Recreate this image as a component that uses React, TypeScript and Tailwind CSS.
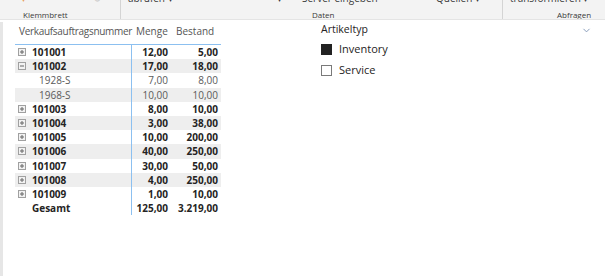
import { ChevronDown } from "lucide-react";

type Row = {
  id: string;
  menge: string;
  bestand: string;
  level: 0 | 1;
  expanded?: boolean;
};

const rows: Row[] = [
  { id: "101001", menge: "12,00", bestand: "5,00", level: 0 },
  { id: "101002", menge: "17,00", bestand: "18,00", level: 0, expanded: true },
  { id: "1928-S", menge: "7,00", bestand: "8,00", level: 1 },
  { id: "1968-S", menge: "10,00", bestand: "10,00", level: 1 },
  { id: "101003", menge: "8,00", bestand: "10,00", level: 0 },
  { id: "101004", menge: "3,00", bestand: "38,00", level: 0 },
  { id: "101005", menge: "10,00", bestand: "200,00", level: 0 },
  { id: "101006", menge: "40,00", bestand: "250,00", level: 0 },
  { id: "101007", menge: "30,00", bestand: "50,00", level: 0 },
  { id: "101008", menge: "4,00", bestand: "250,00", level: 0 },
  { id: "101009", menge: "1,00", bestand: "10,00", level: 0 },
];

function ExpandBox({ open }: { open?: boolean }) {
  return (
    <span className="w-[8px] h-[8px] border border-[#a0a0a0] bg-[#f2f2f2] flex items-center justify-center mr-[6px] shrink-0">
      <svg width="6" height="6" viewBox="0 0 6 6">
        <path d="M1 3h4" stroke="#666" strokeWidth="1" />
        {!open && <path d="M3 1v4" stroke="#666" strokeWidth="1" />}
      </svg>
    </span>
  );
}

function Ribbon() {
  return (
    <div className="h-[20px] bg-[#f3f3f3] border-b border-[#e4e4e4] flex text-[#3a3a3a] overflow-hidden">
      {/* Zwischenablage */}
      <div className="w-[121px] border-r border-[#d4d4d4] flex flex-col">
        <div className="h-[12px] -mt-[8px] flex items-center text-[10px] leading-[12px]">
          <span className="ml-[21px] text-[#e8a060]">▾</span>
          <span className="ml-[67px] text-[#c8c8c8]">↻</span>
        </div>
        <div className="mt-[6px] h-[10px] leading-[10px] text-[8px] pl-[23px]">Klemmbrett</div>
      </div>
      {/* Daten */}
      <div className="w-[382px] border-r border-[#d4d4d4] flex flex-col">
        <div className="h-[12px] -mt-[8px] flex items-center text-[10px] leading-[12px] whitespace-nowrap">
          <span className="w-[156px] pl-[7px]">abrufen ▾</span>
          <span className="w-[25px]">▾</span>
          <span className="w-[134px]">Server eingeben</span>
          <span>Quellen ▾</span>
        </div>
        <div className="mt-[6px] h-[10px] leading-[10px] text-[8px] pl-[191px]">Daten</div>
      </div>
      {/* Abfragen */}
      <div className="flex-1 flex flex-col">
        <div className="h-[12px] -mt-[8px] flex items-center text-[10px] leading-[12px] pl-[7px] whitespace-nowrap">
          transformieren ▾
        </div>
        <div className="mt-[6px] h-[10px] leading-[10px] text-[8px] pl-[54px]">Abfragen</div>
      </div>
    </div>
  );
}

function Matrix() {
  return (
    <div className="ml-[12px] mt-[2px] w-[206px] text-[10px] text-[#252423] leading-[14px]">
      <div className="flex h-[21px] items-start border-b border-[#8cc0f0] text-[#555]">
        <div className="w-[117px] pl-[4px] tracking-[-0.3px] whitespace-nowrap">Verkaufsauftragsnummer</div>
        <div className="w-[38px] pl-[4px]">Menge</div>
        <div className="flex-1 pl-[6px]">Bestand</div>
      </div>
      {rows.map((r, i) => (
        <div
          key={r.id}
          className={`flex h-[14.2px] items-center ${i % 2 === 1 ? "bg-[#eeeeee]" : ""}`}
        >
          <div className="w-[117px] flex items-center pl-[3px] border-r border-[#8cc0f0] h-full">
            {r.level === 0 ? (
              <>
                <ExpandBox open={r.expanded} />
                <span className="font-bold">{r.id}</span>
              </>
            ) : (
              <span className="pl-[21px] text-[#5a5a5a]">{r.id}</span>
            )}
          </div>
          <div className={`w-[38px] pr-[2px] text-right ${r.level === 0 ? "font-bold" : "text-[#5a5a5a]"}`}>
            {r.menge}
          </div>
          <div className={`flex-1 pr-[3px] text-right ${r.level === 0 ? "font-bold" : "text-[#5a5a5a]"}`}>
            {r.bestand}
          </div>
        </div>
      ))}
      <div className="flex h-[14px] items-center font-bold">
        <div className="w-[117px] pl-[17px] border-r border-[#8cc0f0] h-full flex items-center">
          Gesamt
        </div>
        <div className="w-[38px] pr-[2px] text-right">125,00</div>
        <div className="flex-1 pr-[3px] text-right">3.219,00</div>
      </div>
    </div>
  );
}

function Slicer() {
  return (
    <div className="w-[271px] ml-[100px] mt-[1px] text-[#252423]">
      <div className="flex items-center justify-between h-[14px]">
        <span className="text-[10.5px]">Artikeltyp</span>
        <ChevronDown className="w-[11px] h-[11px] text-[#7f95b5]" strokeWidth={2} />
      </div>
      <div className="mt-[5px] flex items-center h-[14px]">
        <span className="w-[11px] h-[11px] bg-[#222222]" />
        <span className="ml-[7px] text-[11px]">Inventory</span>
      </div>
      <div className="mt-[7px] flex items-center h-[14px]">
        <span className="w-[11px] h-[11px] bg-white border border-[#7a7a7a]" />
        <span className="ml-[7px] text-[11px]">Service</span>
      </div>
    </div>
  );
}

export default function App() {
  return (
    <div
      className="w-[605px] h-[276px] bg-white overflow-hidden"
      style={{ fontFamily: '"Open Sans", "Noto Sans", sans-serif' }}
    >
      <Ribbon />
      <div className="flex h-[254px] mt-[2px] border-l-[3px] border-[#e6e6e6]">
        <Matrix />
        <Slicer />
      </div>
    </div>
  );
}
